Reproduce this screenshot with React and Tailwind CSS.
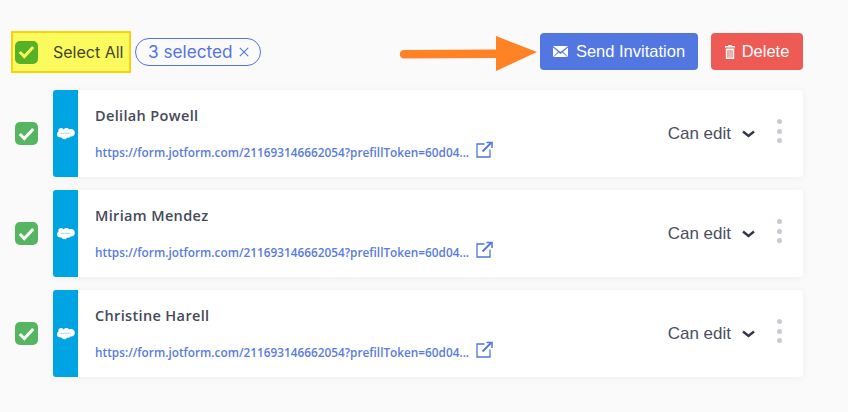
const people = ['Delilah Powell', 'Miriam Mendez', 'Christine Harell'];
const link = 'https://form.jotform.com/211693146662054?prefillToken=60d04...';

function Check({ className }) {
  return (
    <span className={`flex h-[23px] w-[23px] shrink-0 items-center justify-center rounded-[5px] ${className}`}>
      <svg width="17" height="14" viewBox="0 0 17 14" fill="none">
        <path d="M1.800 7 6.300 11.500 15.200 2" stroke="currentColor" strokeWidth="3" />
      </svg>
    </span>
  );
}

function SalesforceLogo() {
  return (
    <svg width="19" height="14" viewBox="0 0 19 14">
      <path
        fill="#fff"
        d="M7.800 2.400C8.500 1.400 9.500 1 10.600 1c1.200 0 2.200.6 2.800 1.500.6-.3 1.200-.4 1.800-.4 2 0 3.600 1.500 3.600 3.600s-1.600 3.700-3.600 3.700h-.8c-.4.800-1.300 1.300-2.200 1.300-.4 0-.8-.1-1.100-.3-.5 1-1.500 1.800-2.800 1.800-1.200 0-2.200-.7-2.700-1.700-.3.100-.5.100-.8.100C2.400 10.600 1 9.300 1 7.500c0-1.200.6-2.200 1.500-2.700-.1-.4-.2-.7-.2-1.100C2.300 2.100 3.600.9 5.100.9c1.100 0 2.100.6 2.700 1.500Z"
      />
      <path d="M4.500 6.300h10" stroke="#8fd0ef" strokeWidth="1" strokeDasharray="1.500 .4" />
    </svg>
  );
}

function Row({ name }) {
  return (
    <div className="flex items-center">
      <Check className="ml-[15px] mr-[15px] bg-[#56b560] text-white" />
      <div className="flex h-[87px] w-[750px] rounded-[3px] bg-white shadow-[0_1px_8px_rgba(0,0,0,0.05)]">
        <div className="flex w-[25px] items-center justify-center rounded-l-[3px] bg-[#00a4e3]">
          <SalesforceLogo />
        </div>
        <div className="flex-1 pl-[17px] pt-[16px]">
          <div className="font-['Open_Sans',sans-serif] text-[14.500px] leading-[20px] font-semibold tracking-[0.35px] text-[#454959]">{name}</div>
          <div className="mt-[15px] flex items-start">
            <a className="mt-[2px] font-['Open_Sans',sans-serif] text-[11.800px] leading-[18px] font-semibold text-[#5a7be0]">{link}</a>
            <svg className="ml-[7px]" width="17" height="17" viewBox="0 0 17 17" fill="none" stroke="#4d76e0" strokeWidth="1.300">
              <path d="M8.500 3H1v13h13V8.500" />
              <path d="M6.500 10.500 15 2" strokeWidth="1.800" />
              <path d="M10.500 1.500h5.500v5.500" strokeWidth="1.500" />
            </svg>
          </div>
        </div>
        <div className="flex items-center pt-[1px] pr-[21px]">
          <span className="font-['Liberation_Sans',sans-serif] text-[17px] text-[#4a4e61]">Can edit</span>
          <svg className="ml-[11px]" width="13" height="8" viewBox="0 0 13 8" fill="none" stroke="#33374a" strokeWidth="2.400">
            <path d="M1 1.500 6.500 6 12 1.500" />
          </svg>
          <div className="-mt-[6px] ml-[22px] flex flex-col gap-[4.500px]">
            <span className="h-[5px] w-[5px] rounded-full bg-[#c8c8d6]" />
            <span className="h-[5px] w-[5px] rounded-full bg-[#c8c8d6]" />
            <span className="h-[5px] w-[5px] rounded-full bg-[#c8c8d6]" />
          </div>
        </div>
      </div>
    </div>
  );
}

export default function App() {
  return (
    <div className="relative h-[412px] w-[848px] overflow-hidden bg-[#fafafa] pt-[31px]">
      <div className="flex h-[42px] w-[803px] items-center">
        <div className="ml-[11px] flex h-[42px] w-[120px] items-center border-2 border-[#fdd00a] bg-[#fbfb5e] pl-[2px]">
          <Check className="bg-[#55b226] text-[#fbfb5e]" />
          <span className="ml-[15px] font-['Inter',sans-serif] text-[16px] text-[#44462a]">Select All</span>
        </div>
        <div className="ml-[4px] flex h-[28px] w-[126px] items-center rounded-full border border-[#5274df] pl-[12px] font-['Inter',sans-serif] text-[#5274df]">
          <span className="text-[17.200px]">3 selected</span>
          <svg className="ml-[6px]" width="10" height="10" viewBox="0 0 10 10" fill="none" stroke="#5274df" strokeWidth="1.100">
            <path d="M.8.8l8.400 8.400M9.200.8.800 9.200" />
          </svg>
        </div>
        <button className="mb-[1px] ml-auto flex h-[37px] w-[158px] items-center justify-center rounded-[4px] bg-[#5277e1] font-['Liberation_Sans',sans-serif] text-[16.500px] text-white">
          <svg width="15" height="11" viewBox="0 0 15 11" fill="#fff">
            <path d="M0 0h15L7.500 6 0 0Z" />
            <path d="M0 1.500v9.500l5-5.300L0 1.500Zm15 0v9.500l-5-5.300 5-4.200ZM.7 11h13.600L9.200 6.500 7.500 8 5.800 6.500.7 11Z" />
          </svg>
          <span className="ml-[8px]">Send Invitation</span>
        </button>
        <button className="mb-[1px] ml-[13px] flex h-[37px] w-[92px] items-center justify-center rounded-[4px] bg-[#ee5b55] font-['Liberation_Sans',sans-serif] text-[16.500px] text-white">
          <svg width="10" height="14" viewBox="0 0 10 14" fill="#fff">
            <path d="M3.500 0h3l.5 1H10v1.500H0V1h3L3.500 0Z" />
            <path d="M.8 3.500h8.400V14H.8V3.500Zm1.700 1.500v7.500h1V5h-1Zm2 0v7.500h1V5h-1Zm2 0v7.500h1V5h-1Z" fillRule="evenodd" />
          </svg>
          <span className="ml-[7px]">Delete</span>
        </button>
      </div>
      <div className="mt-[17px] flex flex-col gap-[13px]">
        {people.map((name) => (
          <Row key={name} name={name} />
        ))}
      </div>
      <svg className="absolute left-[398px] top-[34px]" width="142" height="38" viewBox="0 0 142 38" fill="#ff8225">
        <path d="M6 16 98 15.500V2L139 18 98 37V24L6 24.500a4.200 4.200 0 0 1 0-8.500Z" />
      </svg>
    </div>
  );
}
